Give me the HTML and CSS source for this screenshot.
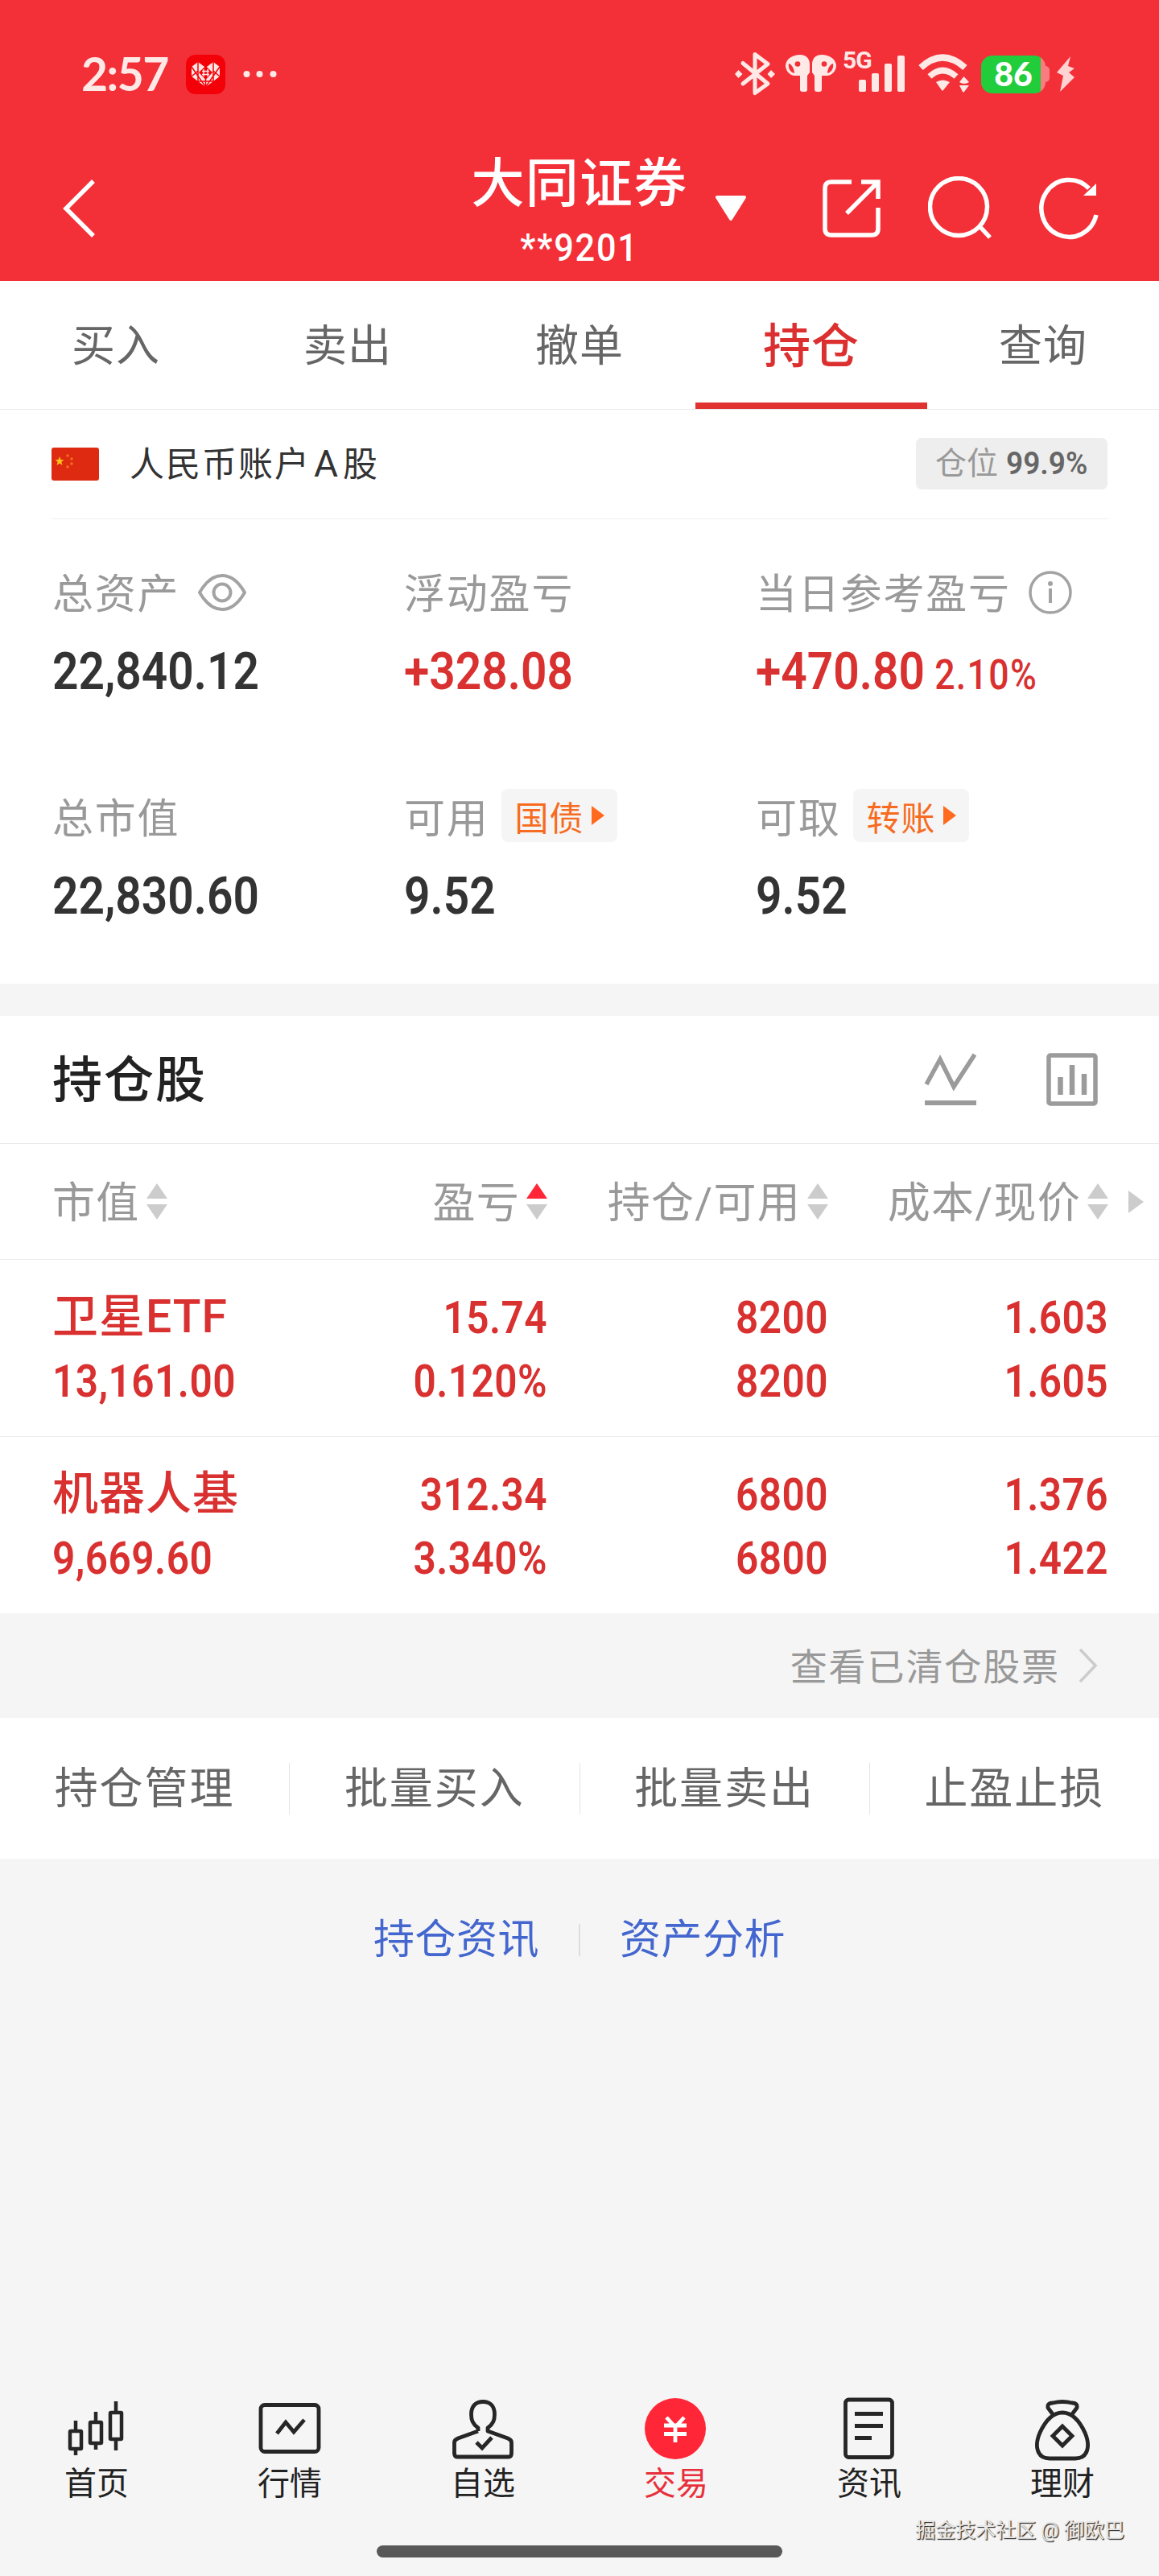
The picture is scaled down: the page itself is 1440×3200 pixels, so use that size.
FILE: index.html
```
<!DOCTYPE html>
<html lang="zh-CN">
<head>
    <meta charset="UTF-8">
    <meta name="viewport" content="width=device-width, initial-scale=1.0">
    <title>大同证券 - 持仓</title>
    <link rel="stylesheet" href="styles.css">
</head>
<body>
    <div class="app">
        <header class="header">
            <!-- Status bar -->
            <div class="status-bar">
                <span class="time">2:57</span>
                <svg class="app-badge" width="49" height="49" viewBox="0 0 49 49">
                    <rect width="49" height="49" rx="12" fill="#f40009"/>
                    <path d="M7 15L15 9L24.500 16L34 9L42 15V27L24.500 40L7 27Z" fill="#ffe4e2"/>
                    <path d="M15 9V33M34 9V33M24.500 30V40M7 15L24.500 40L42 15M7 27L15 20M42 27L34 20M15 33H34" fill="none" stroke="#f40009" stroke-width="1.500"/>
                    <path d="M24.500 14L33 22L24.500 31L16 22Z" fill="#f40009"/>
                    <path d="M22 18V27M27 18V27M20 20.500H29M20 24.500H29" stroke="#ffe4e2" stroke-width="1.500"/>
                </svg>
                <svg class="dots" width="42" height="10" viewBox="0 0 42 10" fill="#ffe9e7">
                    <circle cx="4.500" cy="5" r="4"/>
                    <circle cx="20.500" cy="5" r="4"/>
                    <circle cx="37.500" cy="5" r="4"/>
                </svg>
                <div class="status-icons">
                    <svg width="50" height="60" viewBox="0 0 50 60">
                        <path d="M10 16.500L41 42L25 53.500V5.500L41 17.500L10 42" fill="none" stroke="#ffe9e7" stroke-width="5" stroke-linejoin="round" stroke-linecap="round"/>
                        <path d="M4.500 25L9.500 30L4.500 35L0 30ZM45 25L50 30L45 35L40.500 30Z" fill="#ffe9e7"/>
                    </svg>
                    <svg class="pods" width="63" height="60" viewBox="0 0 63 60">
                        <path d="M18 6C26 6 30 11 30 18V28L27 32V49Q27 52 24 52H21Q18 52 18 49V32H11C4 31 0 25 0 19C1 11 9 6 18 6ZM45 6C37 6 33 11 33 18V28L36 32V49Q36 52 39 52H42Q45 52 45 49V32H52C59 31 63 25 63 19C62 11 54 6 45 6Z" fill="#ffe9e7"/>
                        <circle cx="15" cy="17.500" r="3.300" fill="#f32f38"/>
                        <circle cx="48" cy="17.500" r="3.300" fill="#f32f38"/>
                        <path d="M4 17C3 23 6 28 11 29C11 24 8 18 4 17ZM59 17C60 23 57 28 52 29C52 24 55 18 59 17Z" fill="#f32f38"/>
                    </svg>
                    <div class="signal">
                        <span class="net">5G</span>
                        <svg width="58" height="60" viewBox="0 0 58 60" fill="#ffe9e7">
                            <rect x="1" y="37" width="9" height="15" rx="2"/>
                            <rect x="17" y="29" width="9" height="23" rx="2"/>
                            <rect x="33" y="17" width="9" height="35" rx="2"/>
                            <rect x="49" y="7" width="9" height="45" rx="2"/>
                        </svg>
                    </div>
                    <svg class="wifi" width="64" height="60" viewBox="0 0 64 60">
                        <path d="M3 22Q30 -3 58 22" fill="none" stroke="#ffe9e7" stroke-width="8"/>
                        <path d="M14 33Q30 18 47 33" fill="none" stroke="#ffe9e7" stroke-width="7.500"/>
                        <path d="M22 40Q30 35 39 40L31 50Q30 51.500 29 50ZM51 40L56.500 33L63 40Q57 44 51 40ZM51 44H63L57 52Q56 53 55 52Z" fill="#ffe9e7"/>
                    </svg>
                    <div class="battery"><span class="battery-level">86</span></div>
                    <svg class="bolt" width="22" height="60" viewBox="0 0 22 60">
                        <path d="M17 8L0 28L8 32L4 52L22 34L15 28L22 23L14 20Z" fill="#ffd3d2"/>
                    </svg>
                </div>
            </div>

            <!-- Title bar -->
            <div class="nav">
                <svg class="back" width="44" height="76" viewBox="0 0 44 76">
                    <path d="M39 4L5 38L39 72" fill="none" stroke="#fff" stroke-width="5.500"/>
                </svg>
                <div class="nav-title">
                    <div class="broker">大同证券</div>
                    <div class="account-no">**9201</div>
                </div>
                <svg class="dropdown" width="40" height="34" viewBox="0 0 40 34">
                    <path d="M3 3H37L20 30Z" fill="#fff" stroke="#fff" stroke-width="4" stroke-linejoin="round"/>
                </svg>
                <div class="nav-icons">
                    <svg width="74" height="74" viewBox="0 0 74 74" fill="none" stroke="#fff" stroke-width="5.500">
                        <path d="M37 4H12Q4 4 4 12V62Q4 70 12 70H62Q70 70 70 62V36M49 4H70V25M69 5L31 43"/>
                    </svg>
                    <svg width="80" height="80" viewBox="0 0 80 80" fill="none" stroke="#fff" stroke-width="5.500">
                        <circle cx="38" cy="38" r="35.500"/>
                        <path d="M64 62L77 76"/>
                    </svg>
                    <svg width="76" height="80" viewBox="0 0 76 80" fill="none" stroke="#fff" stroke-width="5.500">
                        <path d="M71 48A34.500 35.500 0 1 1 62 15"/>
                        <path d="M71 9V24H55Z" fill="#fff" stroke="none"/>
                    </svg>
                </div>
            </div>
        </header>

        <nav class="tabs">
            <a class="tab">买入</a>
            <a class="tab">卖出</a>
            <a class="tab">撤单</a>
            <a class="tab active">持仓</a>
            <a class="tab">查询</a>
        </nav>

        <!-- Account -->
        <div class="account">
            <svg class="flag" width="59" height="41" viewBox="0 0 59 41">
                <rect width="59" height="41" rx="3" fill="#dd2a10"/>
                <path d="M10 11L11.500 15L15.500 15.200L12.300 17.800L13.500 22L10 19.500L6.500 22L7.700 17.800L4.500 15.200L8.500 15Z" fill="#ffc21a"/>
                <circle cx="20" cy="10" r="1.800" fill="#f0701c"/>
                <circle cx="25" cy="14" r="1.800" fill="#f0701c"/>
                <circle cx="25" cy="20" r="1.800" fill="#f0701c"/>
                <circle cx="20" cy="24" r="1.800" fill="#f0701c"/>
            </svg>
            <span class="account-name">人民币账户<span class="letter">A</span>股</span>
            <span class="position">仓位 <b>99.9%</b></span>
        </div>

        <!-- Assets -->
        <div class="assets">
            <div class="asset">
                <div class="asset-label">总资产
                    <svg class="eye" width="60" height="48" viewBox="0 0 60 48" fill="none" stroke="#a3a3a3" stroke-width="4">
                        <path d="M2 24Q14 3 30 3T58 24Q46 45 30 45T2 24Z" stroke-linejoin="round"/>
                        <circle cx="30" cy="24" r="10.500"/>
                    </svg>
                </div>
                <div class="asset-value">22,840.12</div>
            </div>
            <div class="asset">
                <div class="asset-label">浮动盈亏</div>
                <div class="asset-value red">+328.08</div>
            </div>
            <div class="asset">
                <div class="asset-label">当日参考盈亏
                    <svg class="info" width="54" height="54" viewBox="0 0 54 54">
                        <circle cx="27" cy="27" r="25" fill="none" stroke="#a3a3a3" stroke-width="3.500"/>
                        <circle cx="27" cy="16" r="3" fill="#a3a3a3"/>
                        <path d="M27 22V40" stroke="#a3a3a3" stroke-width="4"/>
                    </svg>
                </div>
                <div class="asset-value red">+470.80<span class="rate">2.10%</span></div>
            </div>
            <div class="asset">
                <div class="asset-label">总市值</div>
                <div class="asset-value">22,830.60</div>
            </div>
            <div class="asset">
                <div class="asset-label">可用
                    <span class="tag">国债<i class="tag-arrow"></i></span>
                </div>
                <div class="asset-value">9.52</div>
            </div>
            <div class="asset">
                <div class="asset-label">可取
                    <span class="tag">转账<i class="tag-arrow"></i></span>
                </div>
                <div class="asset-value">9.52</div>
            </div>
        </div>

        <!-- Holdings -->
        <div class="holdings">
            <div class="holdings-head">
                <h2>持仓股</h2>
                <svg class="line-icon" width="66" height="68" viewBox="0 0 66 68" fill="none" stroke="#9b9b9b">
                    <path d="M3 40L20 9L37 43L63 3" stroke-width="5.500"/>
                    <path d="M1 63H65" stroke-width="6"/>
                </svg>
                <svg width="66" height="68" viewBox="0 0 66 68" fill="none" stroke="#9b9b9b">
                    <rect x="4" y="4" width="58" height="60" rx="2" stroke-width="5.500"/>
                    <path d="M18.500 31V53M33 16V53M48 27V53" stroke-width="6.500"/>
                </svg>
            </div>
            <div class="row row-head">
                <span class="sort"><span>市值</span><i class="arrows"></i></span>
                <span class="sort"><span>盈亏</span><i class="arrows up"></i></span>
                <span class="sort"><span>持仓/可用</span><i class="arrows"></i></span>
                <span class="sort"><span>成本/现价</span><i class="arrows"></i></span>
                <i class="more"></i>
            </div>
            <div class="row">
                <div class="cell"><span class="name">卫星ETF</span><span class="num">13,161.00</span></div>
                <div class="cell"><span class="num">15.74</span><span class="num">0.120%</span></div>
                <div class="cell"><span class="num">8200</span><span class="num">8200</span></div>
                <div class="cell"><span class="num">1.603</span><span class="num">1.605</span></div>
            </div>
            <div class="row">
                <div class="cell"><span class="name">机器人基</span><span class="num">9,669.60</span></div>
                <div class="cell"><span class="num">312.34</span><span class="num">3.340%</span></div>
                <div class="cell"><span class="num">6800</span><span class="num">6800</span></div>
                <div class="cell"><span class="num">1.376</span><span class="num">1.422</span></div>
            </div>
        </div>

        <div class="cleared">
            <span>查看已清仓股票</span>
            <svg width="26" height="44" viewBox="0 0 26 44">
                <path d="M3 2L22 22L3 42" fill="none" stroke="#ccc" stroke-width="3.500"/>
            </svg>
        </div>

        <div class="actions">
            <a class="action">持仓管理</a>
            <a class="action">批量买入</a>
            <a class="action">批量卖出</a>
            <a class="action">止盈止损</a>
        </div>

        <div class="links">
            <a>持仓资讯</a>
            <a>资产分析</a>
        </div>

        <!-- Bottom menu -->
        <nav class="menu">
            <a class="menu-item">
                <svg width="80" height="80" viewBox="0 0 80 80" fill="none" stroke="#262626" stroke-width="4.500">
                    <rect x="7" y="42" width="14" height="22" rx="1"/>
                    <rect x="32" y="31" width="14" height="26" rx="1"/>
                    <rect x="57" y="19" width="14" height="33" rx="1"/>
                    <path d="M14 29V41M14 65V72M39 18V30M39 58V65M64 5V18M64 53V66"/>
                </svg>
                首页
            </a>
            <a class="menu-item">
                <svg width="80" height="80" viewBox="0 0 80 80" fill="none" stroke="#262626" stroke-width="4.800">
                    <rect x="4" y="9.500" width="72" height="58" rx="5"/>
                    <path d="M24 45L35 31L45 43L58 28"/>
                </svg>
                行情
            </a>
            <a class="menu-item">
                <svg width="80" height="80" viewBox="0 0 80 80" fill="none" stroke="#262626" stroke-width="4.800" stroke-linejoin="round">
                    <path d="M34 42V38C27 33 25.500 28 25.500 21C25.500 11 31 5.500 40 5.500S54.500 11 54.500 21C54.500 28 53 33 46 38V42L71 51Q75.500 53 75.500 56V69Q75.500 74 72 74H8Q4.500 74 4.500 69V56Q4.500 53 9 51L34 42"/>
                    <path d="M32 56L39 63L51 50" stroke-linejoin="miter"/>
                </svg>
                自选
            </a>
            <a class="menu-item current">
                <svg width="80" height="80" viewBox="0 0 80 80">
                    <circle cx="39" cy="39" r="38" fill="#ff2737"/>
                    <path d="M28 25L39 37L50 25M25 35H53M25 45.500H53M39 36V56" fill="none" stroke="#fff" stroke-width="4.800"/>
                </svg>
                交易
            </a>
            <a class="menu-item">
                <svg width="80" height="80" viewBox="0 0 80 80" fill="none" stroke="#262626" stroke-width="4.800">
                    <rect x="10.500" y="3" width="58" height="71.500" rx="4"/>
                    <path d="M22 20.500H57M22 35.500H57M22 50.500H43"/>
                </svg>
                资讯
            </a>
            <a class="menu-item">
                <svg width="80" height="80" viewBox="0 0 80 80" fill="none" stroke="#262626" stroke-width="4.800" stroke-linejoin="round">
                    <path d="M28 21L22 13Q21 7 28 7Q40 4 52 7Q59 7 58 13L52 21"/>
                    <path d="M40 19C53 19 62 31 68 44C75 60 72 76 56 76H24C8 76 5 60 12 44C18 31 27 19 40 19Z"/>
                    <path d="M40 36L52 48L40 60L28 48Z" stroke-linejoin="miter"/>
                </svg>
                理财
            </a>
        </nav>
        <div class="home-bar"></div>
        <div class="watermark">掘金技术社区 @ 御欧巴</div>
    </div>
</body>
</html>
```
FILE: styles.css
```
* {
    box-sizing: border-box;
}
body {
    margin: 0;
    background-color: #f5f5f5;
    font-family: Roboto, "Noto Sans CJK SC", sans-serif;
    color: #333;
}
svg {
    display: block;
    flex-shrink: 0;
}
i {
    display: block;
}
.app {
    position: relative;
    display: flex;
    flex-direction: column;
    width: 1440px;
    height: 3200px;
    overflow: hidden;
}

/* header */
.header {
    height: 349px;
    background-color: #f32f38;
    color: #fff;
}
.status-bar {
    display: flex;
    align-items: center;
    height: 184px;
    padding: 0 105px 0 101px;
}
.time {
    width: 130px;
    padding-bottom: 3px;
    font-family: Lato, sans-serif;
    font-size: 57px;
    font-weight: 700;
    letter-spacing: -1.5px;
    color: #ffe9e7;
}
.dots {
    margin-left: 22px;
}
.status-icons {
    display: flex;
    align-items: center;
    margin-left: auto;
}
.pods {
    margin-left: 13px;
}
.signal {
    display: flex;
    width: 77px;
    margin-left: 8px;
}
.net {
    width: 39px;
    margin-right: -20px;
    font-size: 30px;
    font-weight: 700;
    letter-spacing: -1px;
    line-height: 25px;
    color: #ffe9e7;
}
.wifi {
    margin-left: 17px;
}
.battery {
    display: flex;
    align-items: center;
    margin: 0 9px 0 14px;
}
.battery-level {
    width: 80px;
    height: 47px;
    border-radius: 14px;
    background: linear-gradient(to right, #22cd3c 74px, #f97c80 74px);
    font-family: Lato, sans-serif;
    font-size: 41px;
    font-weight: 900;
    line-height: 46px;
    text-align: center;
}
.battery::after {
    content: "";
    width: 5px;
    height: 20px;
    border-radius: 0 5px 5px 0;
    background-color: #f97c80;
}
.nav {
    display: flex;
    align-items: center;
    height: 150px;
    padding-left: 77px;
}
.nav-title {
    width: 280px;
    margin-left: 459px;
    padding-top: 17px;
    text-align: center;
}
.broker {
    font-size: 66px;
    font-weight: 500;
    letter-spacing: 1.3px;
    line-height: 80px;
}
.account-no {
    font-size: 48px;
    font-weight: 500;
    letter-spacing: 2px;
    line-height: 78px;
    transform: scaleX(0.9);
}
.dropdown {
    margin-left: 28px;
}
.nav-icons {
    display: flex;
    align-items: center;
    gap: 58px;
    margin-left: 93px;
}

/* tabs */
.tabs {
    display: flex;
    height: 160px;
    background-color: #fff;
    border-bottom: 1px solid #eaeaea;
}
.tab {
    flex: 1;
    font-size: 54px;
    letter-spacing: 1px;
    line-height: 163px;
    text-align: center;
    color: #666;
}
.tab.active {
    border-bottom: 8px solid #e03230;
    font-size: 59px;
    font-weight: 500;
    color: #dc2f2f;
}

/* account */
.account {
    display: flex;
    align-items: center;
    height: 136px;
    padding: 0 64px 2px;
    background: linear-gradient(#eee, #eee) 64px 100% / 1312px 1px no-repeat #fff;
}
.account-name {
    margin: -6px 0 0 38px;
    font-size: 43px;
    letter-spacing: 2px;
}
.letter {
    padding: 0 4px;
    font-size: 46px;
}
.position {
    width: 238px;
    margin-left: auto;
    padding-left: 24px;
    border-radius: 7px;
    background-color: #eee;
    font-size: 39px;
    line-height: 64px;
    white-space: nowrap;
    color: #999;
}
.position b {
    display: inline-block;
    font-weight: 600;
    transform: scaleX(0.95);
    transform-origin: left;
    color: #666;
}

/* assets */
.assets {
    display: grid;
    grid-template-columns: 437px 437px 1fr;
    align-content: start;
    row-gap: 99px;
    height: 577px;
    padding: 54px 0 0 65px;
    background-color: #fff;
}
.asset-label {
    display: flex;
    align-items: center;
    height: 70px;
    font-size: 51px;
    letter-spacing: 1.8px;
    color: #999;
}
.eye {
    margin: 3px 0 0 23px;
}
.info {
    margin: 3px 0 0 22px;
}
.asset-value {
    margin-top: 25px;
    font-size: 65px;
    font-weight: 600;
    line-height: 80px;
    transform: scaleX(0.875);
    transform-origin: left;
}
.red {
    color: #d93030;
}
.rate {
    margin-left: 14px;
    font-size: 51px;
    font-weight: 500;
    letter-spacing: 1.5px;
}
.tag {
    display: flex;
    align-items: center;
    width: 144px;
    height: 66px;
    margin-left: 15px;
    padding-left: 17px;
    border-radius: 8px;
    background-color: #f5f5f5;
    font-size: 42px;
    letter-spacing: 1px;
    color: #f76b20;
}
.tag-arrow {
    margin-left: 9px;
    border: solid transparent;
    border-width: 12px 0 12px 16px;
    border-left-color: #ff6a1f;
}

/* holdings */
.holdings {
    margin-top: 40px;
    background-color: #fff;
}
.holdings-head {
    display: flex;
    align-items: center;
    height: 159px;
    padding: 0 75px 0 65px;
    border-bottom: 1px solid #eaeaea;
}
.holdings-head h2 {
    margin: 0 auto 0 0;
    padding-bottom: 9px;
    font-size: 62px;
    font-weight: 500;
    letter-spacing: 2px;
    color: #222;
}
.line-icon {
    margin-right: 85px;
}
.row {
    display: grid;
    grid-template-columns: 300px 315px 349px 348px 1fr;
    align-items: center;
    height: 220px;
    padding: 4px 0 0 65px;
    border-bottom: 1px solid #ececec;
}
.row:last-child {
    height: 219px;
    border-bottom: none;
}
.row-head {
    height: 144px;
    padding-top: 0;
}
.sort {
    display: flex;
    align-items: center;
    justify-content: flex-end;
    font-size: 53px;
    letter-spacing: 1.3px;
    color: #999;
}
.sort span {
    padding-bottom: 6px;
}
.sort:first-child {
    justify-content: flex-start;
}
.arrows {
    margin-left: 8px;
}
.arrows::before,
.arrows::after {
    content: "";
    display: block;
    border: solid transparent;
    border-width: 0 13.5px 19px;
    border-bottom-color: #ccc;
}
.arrows::after {
    margin-top: 7px;
    border-width: 19px 13.5px 0;
    border-top-color: #ccc;
}
.arrows.up::before {
    border-bottom-color: #ff2737;
}
.more {
    width: 0;
    margin-left: 25px;
    border: solid transparent;
    border-width: 14px 0 14px 19px;
    border-left-color: #ccc;
}
.cell {
    display: flex;
    flex-direction: column;
    text-align: right;
    font-size: 56px;
    line-height: 79px;
    color: #d93030;
}
.num {
    font-weight: 600;
    letter-spacing: 0.5px;
    transform: scaleX(0.885);
    transform-origin: right;
}
.cell:first-child {
    text-align: left;
}
.cell:first-child .num {
    transform-origin: left;
}
.name {
    font-size: 57px;
    font-weight: 500;
    letter-spacing: 1px;
    line-height: 76px;
    padding-bottom: 3px;
}

.cleared {
    display: flex;
    align-items: center;
    justify-content: flex-end;
    height: 130px;
    padding-right: 75px;
    font-size: 46px;
    letter-spacing: 1.9px;
    color: #999;
}
.cleared span {
    padding-bottom: 4px;
}
.cleared svg {
    margin-left: 22px;
}

.actions {
    display: flex;
    align-items: center;
    height: 175px;
    background-color: #fff;
}
.action {
    flex: 1;
    height: 64px;
    border-right: 1px solid #e4e4e4;
    font-size: 54px;
    letter-spacing: 2px;
    line-height: 66px;
    text-align: center;
    color: #666;
}
.action:last-child {
    border-right: none;
}

.links {
    display: flex;
    justify-content: center;
    align-items: center;
    margin-top: 81px;
}
.links a {
    padding: 0 49px;
    font-size: 51px;
    letter-spacing: 0.5px;
    line-height: 40px;
    color: #4366cf;
}
.links a + a {
    border-left: 2px solid #ddd;
}

/* bottom menu */
.menu {
    display: flex;
    margin-top: auto;
}
.menu-item {
    display: flex;
    flex: 1;
    flex-direction: column;
    align-items: center;
    font-size: 40px;
    line-height: 56px;
    color: #222;
}
.menu-item.current {
    color: #e8303c;
}
.home-bar {
    width: 504px;
    height: 15px;
    margin: 48px auto 23px;
    border-radius: 8px;
    background-color: #585858;
}
.watermark {
    position: absolute;
    right: 43px;
    bottom: 40px;
    font-size: 25px;
    line-height: 32px;
    color: #e8e8e8;
    text-shadow: 1px 1px 1px #333, 1px 1px 1px #555;
}
```
